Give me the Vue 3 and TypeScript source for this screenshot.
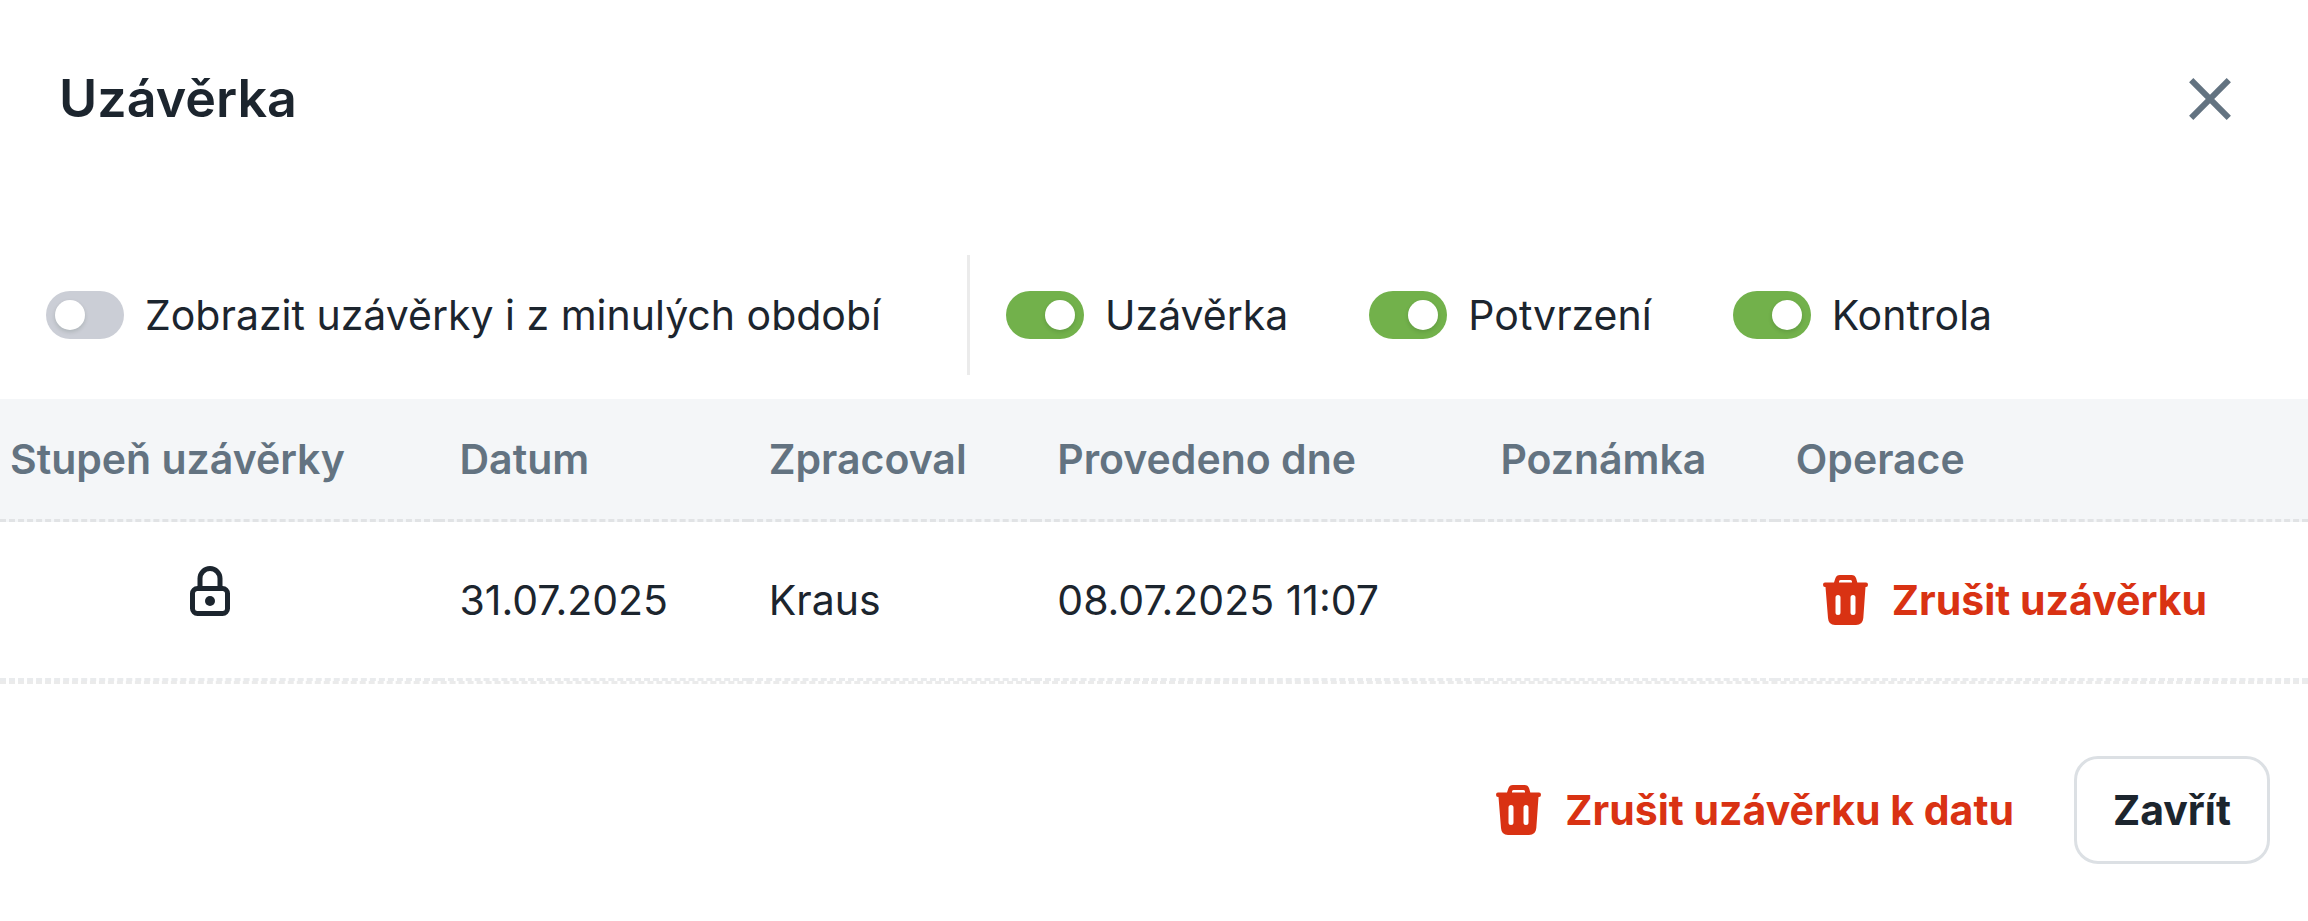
<script setup lang="ts">
import { ref } from 'vue'

interface Filter {
  id: string
  label: string
  on: boolean
}

interface Closing {
  date: string
  author: string
  performedAt: string
  note: string
}

const showPast = ref(false)

const filters = ref<Filter[]>([
  { id: 'closing', label: 'Uzávěrka', on: true },
  { id: 'confirmation', label: 'Potvrzení', on: true },
  { id: 'check', label: 'Kontrola', on: true },
])

const columns: string[] = [
  'Stupeň uzávěrky',
  'Datum',
  'Zpracoval',
  'Provedeno dne',
  'Poznámka',
  'Operace',
]

const closings: Closing[] = [
  { date: '31.07.2025', author: 'Kraus', performedAt: '08.07.2025 11:07', note: '' },
]

// Bin with a handle, a lid and two slots; even-odd fill cuts the openings.
const trashPath =
  'M11 7.5 12.3 3.4Q13.4 0 17 0H28.5Q32 0 33.2 3.4L34.3 7.5H43Q45 7.5 45 9.7Q45 12 43 12H42.5L40.3 43Q39.7 50 33 50H12Q5.5 50 5 43L2.5 12H2Q0 12 0 9.7Q0 7.5 2 7.5Z' +
  'M16 7.5H29V6.5Q29 5 27.5 5H17.5Q16 5 16 6.5Z' +
  'M12.5 22.5V37.5Q12.5 40 15 40Q17.5 40 17.5 37.5V22.5Q17.5 20 15 20Q12.5 20 12.5 22.5Z' +
  'M27.5 22.5V37.5Q27.5 40 30 40Q32.5 40 32.5 37.5V22.5Q32.5 20 30 20Q27.5 20 27.5 22.5Z'
</script>

<template>
  <main class="dialog">
    <header class="head">
      <h1 class="title">Uzávěrka</h1>
      <button class="close" type="button" aria-label="Zavřít dialog">
        <svg viewBox="0 0 42 42" width="42" height="42" aria-hidden="true">
          <path d="M2.2 2.2 39.8 39.8M39.8 2.2 2.2 39.8" fill="none" stroke="currentColor" stroke-width="6" />
        </svg>
      </button>
    </header>

    <section class="filters">
      <label class="toggle past" for="past">
        <input id="past" v-model="showPast" class="switch" type="checkbox" />
        <span>Zobrazit uzávěrky i z minulých období</span>
      </label>
      <div class="group">
        <label v-for="f in filters" :key="f.id" class="toggle" :for="f.id">
          <input :id="f.id" v-model="f.on" class="switch" type="checkbox" />
          <span>{{ f.label }}</span>
        </label>
      </div>
    </section>

    <table class="grid">
      <colgroup>
        <col class="c-level" />
        <col class="c-date" />
        <col class="c-author" />
        <col class="c-performed" />
        <col class="c-note" />
        <col />
      </colgroup>
      <thead>
        <tr>
          <th v-for="c in columns" :key="c" scope="col">{{ c }}</th>
        </tr>
      </thead>
      <tbody>
        <tr v-for="row in closings" :key="row.date">
          <td class="level">
            <svg class="lock" viewBox="0 0 40 50" width="40" height="50" aria-hidden="true">
              <g fill="none" stroke="currentColor" stroke-width="5">
                <rect x="2.5" y="22.5" width="35" height="25" rx="5" />
                <path d="M10 22.5V12.5a10 10 0 0 1 20 0V22.5" />
              </g>
              <circle cx="20" cy="35" r="5" fill="currentColor" />
            </svg>
          </td>
          <td>{{ row.date }}</td>
          <td>{{ row.author }}</td>
          <td>{{ row.performedAt }}</td>
          <td>{{ row.note }}</td>
          <td>
            <button class="danger" type="button">
              <svg viewBox="0 0 45 50" width="45" height="50" aria-hidden="true">
                <path :d="trashPath" fill="currentColor" fill-rule="evenodd" />
              </svg>
              <span>Zrušit uzávěrku</span>
            </button>
          </td>
        </tr>
      </tbody>
    </table>

    <footer class="actions">
      <button class="danger" type="button">
        <svg viewBox="0 0 45 50" width="45" height="50" aria-hidden="true">
          <path :d="trashPath" fill="currentColor" fill-rule="evenodd" />
        </svg>
        <span>Zrušit uzávěrku k datu</span>
      </button>
      <button class="outlined" type="button">Zavřít</button>
    </footer>
  </main>
</template>

<style>
body {
  margin: 0;
  background: #fff;
}
</style>

<style scoped>
.dialog {
  font-family: Inter, 'Liberation Sans', sans-serif;
  font-size: 41px;
  line-height: 66px;
  color: #1c252e;
}

.head {
  display: flex;
  align-items: center;
  justify-content: space-between;
  padding: 60px 59px;
}

.title {
  margin: 0;
  font-size: 52px;
  line-height: 78px;
  font-weight: 600;
}

button {
  font: inherit;
  color: inherit;
  background: none;
  border: 0;
  cursor: pointer;
}

button svg {
  flex: none;
  display: block;
}

.close {
  padding: 18px;
  color: #637381;
}

.filters {
  display: flex;
  padding: 57px 46px 24px;
}

.toggle {
  display: flex;
  align-items: center;
  gap: 21px;
  white-space: nowrap;
}

.past {
  flex: none;
  width: 921px;
}

.group {
  display: flex;
  align-items: center;
  gap: 81px;
  height: 120px;
  padding-left: 36px;
  border-left: 3px solid #ebebeb;
}

.switch {
  appearance: none;
  flex: none;
  box-sizing: border-box;
  display: flex;
  width: 78px;
  height: 48px;
  margin: 0;
  padding: 9px;
  border-radius: 24px;
  background: #cbced6;
}

.switch::before {
  content: '';
  width: 30px;
  height: 30px;
  border-radius: 50%;
  background: #fff;
  box-shadow: 0 2px 4px rgb(0 35 11 / 15%);
}

.switch:checked {
  justify-content: flex-end;
  background: #72b14b;
}

.grid {
  width: 100%;
  table-layout: fixed;
  border-spacing: 0;
  border-bottom: 3px dashed #ebebeb;
}

.c-level {
  width: 19%;
}

.c-date {
  width: 13.4%;
}

.c-author {
  width: 12.5%;
}

.c-performed {
  width: 19.2%;
}

.c-note {
  width: 12.8%;
}

th,
td {
  padding: 27px 18px 27px 21px;
  text-align: left;
  white-space: nowrap;
}

th {
  font-weight: 600;
  color: #637381;
  background: #f4f6f8;
  border-bottom: 3px dashed #e1e3e5;
}

td {
  height: 102px;
  border-bottom: 3px dashed #e9ebed;
}

th:first-child {
  padding-left: 10px;
}

.level {
  padding-left: 0;
}

.lock {
  display: block;
  margin: 0 auto 18px;
}

.danger {
  display: inline-flex;
  align-items: center;
  gap: 24px;
  padding: 18px 27px;
  font-weight: 700;
  color: #d93213;
  white-space: nowrap;
}

.actions {
  display: flex;
  justify-content: flex-end;
  align-items: center;
  gap: 33px;
  padding: 72px 38px 57px;
}

.outlined {
  padding: 18px 36px;
  font-weight: 700;
  border: 3px solid #dce0e4;
  border-radius: 24px;
}
</style>
